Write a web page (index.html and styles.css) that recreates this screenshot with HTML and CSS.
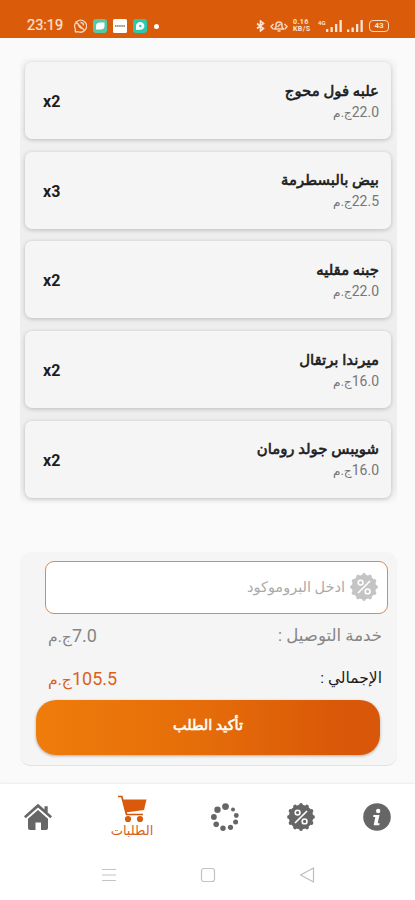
FILE: index.html
```html
<!DOCTYPE html>
<html lang="ar" dir="rtl">
<head>
<meta charset="utf-8">
<title>الطلبات</title>
<link rel="stylesheet" href="styles.css">
</head>
<body>
<svg class="defs" width="0" height="0" aria-hidden="true">
  <symbol id="percent" viewBox="0 0 28 28">
    <circle cx="14" cy="14" r="12.200" fill="currentColor"/>
    <circle cx="14" cy="14" r="12" fill="none" stroke="currentColor" stroke-width="3.800" stroke-linecap="round" pathLength="12" stroke-dasharray="0.001 0.999"/>
    <path d="M8 20 20 8" stroke="var(--hole)" stroke-width="1.700"/>
    <circle cx="10.600" cy="9.600" r="2.400" fill="none" stroke="var(--hole)" stroke-width="1.600"/>
    <circle cx="17.600" cy="18.400" r="2.400" fill="none" stroke="var(--hole)" stroke-width="1.600"/>
  </symbol>
</svg>
<div class="screen">
  <header class="status" dir="ltr">
    <div class="status-left">
      <span class="clock">23:19</span>
      <svg width="14" height="14" viewBox="0 0 14 14" fill="none" stroke="#f8d5bd" stroke-width="1.3"><path d="M2 12.5 2.6 10.5A6 6 0 1 1 5 12.6L2 13M2.5 2.5 11.5 11.5M5 4c0 3 2 5.500 5 5.500M7.500 3.500q3 0 3 3"/></svg>
      <svg width="14" height="14" viewBox="0 0 14 14"><rect width="14" height="14" rx="3" fill="#56c8a4"/><path d="M3 10.500V7q0-3.500 4-3.500h4.500V7q0 3.500-4 3.500z" fill="#fff"/></svg>
      <svg width="14" height="14" viewBox="0 0 14 14"><rect width="14" height="14" rx="1.500" fill="#fff"/><path d="M2 7h10" stroke="#a98d72" stroke-width="2" stroke-dasharray="1.500 .6"/></svg>
      <svg width="14" height="14" viewBox="0 0 14 14"><rect width="14" height="14" rx="3" fill="#2dc7ae"/><path d="M3 11V7a4.200 3.900 0 1 1 4 3.800z" fill="#fff"/><circle cx="7.300" cy="7" r="1.200" fill="#2dc7ae"/></svg>
      <i class="dot"></i>
    </div>
    <div class="status-right">
      <svg width="9" height="12" viewBox="0 0 9 12" fill="none" stroke="#fbe4d4" stroke-width="1.600"><path d="M1 3.500 7.500 8.500 4.500 11V1L7.500 3.500 1 8.500"/></svg>
      <svg width="18" height="12" viewBox="0 0 18 12" fill="none" stroke="#f8d5bd" stroke-width="1.500"><path d="M4.500 9h9L12 7V5a3 3 0 0 0-6 0v2zM7.500 11h3M3.500 4 1 6.500 3 9M14.500 4 17 6.500 15 9M7.500 7 10.500 4"/></svg>
      <span class="rate"><span>0.16</span><span>KB/S</span></span>
      <span class="signal"><span class="gen">4G</span><svg width="16" height="12" viewBox="0 0 16 12" fill="#fbe4d4"><path d="M0 9h2.300v3H0zM4.500 7h2.300v5H4.500zM9 4h2.300v8H9zM13.500 0h2.300v12h-2.300z"/></svg></span>
      <svg width="16" height="12" viewBox="0 0 16 12" fill="#fbe4d4"><path d="M0 9.500h2.300V12H0zM4.500 7.500h2.300V12H4.500zM9 4h2.300v8H9zM13.500 0h2.300v12h-2.300z"/></svg>
      <span class="battery">43</span>
    </div>
  </header>

  <main>
    <section class="items">
      <article class="card"><div class="info"><h2>علبه فول محوج</h2><p>22.0<span class="cur">ج.م</span></p></div><b dir="ltr">x2</b></article>
      <article class="card"><div class="info"><h2>بيض بالبسطرمة</h2><p>22.5<span class="cur">ج.م</span></p></div><b dir="ltr">x3</b></article>
      <article class="card"><div class="info"><h2>جبنه مقليه</h2><p>22.0<span class="cur">ج.م</span></p></div><b dir="ltr">x2</b></article>
      <article class="card"><div class="info"><h2>ميرندا برتقال</h2><p>16.0<span class="cur">ج.م</span></p></div><b dir="ltr">x2</b></article>
      <article class="card"><div class="info"><h2>شويبس جولد رومان</h2><p>16.0<span class="cur">ج.م</span></p></div><b dir="ltr">x2</b></article>
    </section>

    <section class="summary">
      <div class="promo">
        <svg class="promo-icon" width="28" height="28"><use href="#percent"/></svg>
        <span>ادخل البروموكود</span>
      </div>
      <div class="row fee"><span>خدمة التوصيل :</span><span class="num">7.0<span class="cur">ج.م</span></span></div>
      <div class="row total"><span>الإجمالي :</span><span class="num">105.5<span class="cur">ج.م</span></span></div>
      <button class="confirm">تأكيد الطلب</button>
    </section>
  </main>

  <nav class="tabs" dir="ltr">
    <div class="tab"><svg width="28" height="28" viewBox="0 0 28 28" fill="#666"><path d="M14 .8 20.500 6.500V3.200h3.200v6.200L28 13.300l-1.700 1.900L14 4.500 1.700 15.200 0 13.300z"/><path d="M14 7 24 15.700V25q0 2-2 2h-5v-7.500h-5.500V27H6q-2 0-2-2v-9.300z"/></svg></div>
    <div class="tab active"><svg width="29" height="28" viewBox="0 0 29 28"><path d="M0 1.500h3.800L8.500 19.500H25" fill="none" stroke="#cf560e" stroke-width="1.700"/><path d="M4.500 4.500H28.500L26 15 7.500 17.500z" fill="#d95a0b"/><circle cx="10" cy="24" r="3.100" fill="#d95a0b"/><circle cx="22" cy="24" r="3.100" fill="#d95a0b"/></svg><span>الطلبات</span></div>
    <div class="tab"><svg width="28" height="28" viewBox="0 0 28 28" fill="#666"><circle cx="14.500" cy="3.600" r="3.400"/><circle cx="22" cy="6.500" r="2"/><circle cx="25.300" cy="12.500" r="2.400"/><circle cx="24.600" cy="19" r="2.500"/><circle cx="19.500" cy="24.300" r="2.600"/><circle cx="12" cy="25.300" r="2.700"/><circle cx="5.200" cy="21.300" r="2.800"/><circle cx="2.900" cy="14" r="2.900"/><circle cx="6.500" cy="6.700" r="3.200"/></svg></div>
    <div class="tab offers"><svg width="28" height="28"><use href="#percent"/></svg></div>
    <div class="tab"><svg width="28" height="28" viewBox="0 0 28 28"><circle cx="14" cy="14" r="13.800" fill="#666"/><circle cx="15.200" cy="8" r="2.200" fill="#fff"/><path d="M10.500 12h6l-1.800 8.200h2l-.5 2h-5.500l1.600-8.200h-2.200z" fill="#fff"/></svg></div>
  </nav>
  <footer class="system" dir="ltr">
    <svg width="16" height="16" viewBox="0 0 16 16" stroke="#c4c4c4" stroke-width="1.200"><path d="M1 2.500h14M1 8h14M1 13.500h14"/></svg>
    <svg width="16" height="16" viewBox="0 0 16 16" fill="none" stroke="#c4c4c4" stroke-width="1.200"><rect x="1.500" y="1.500" width="13" height="13" rx="2.500"/></svg>
    <svg width="16" height="16" viewBox="0 0 16 16" fill="none" stroke="#bdbdbd" stroke-width="1.200" stroke-linejoin="round"><path d="M14.500 1v14L1.500 8z"/></svg>
  </footer>
</div>
</body>
</html>
```
FILE: styles.css
```css
* { box-sizing: border-box; margin: 0; }
body { background: #fafafa; font-family: Roboto, "DejaVu Sans", sans-serif; color: #1c1c1c; }
.defs { display: block; }
.screen { width: 415px; height: 900px; display: flex; flex-direction: column; overflow: hidden; }

.status { height: 38px; background: #da5b0a; color: #fbe4d4; display: flex; justify-content: space-between; align-items: flex-end; padding: 0 26px 5px 27px; }
.status-left { display: flex; align-items: center; gap: 6px; }
.status-left svg { display: block; }
.clock { font-size: 14.5px; line-height: 14px; width: 40px; -webkit-text-stroke: .2px; }
.dot { width: 5px; height: 5px; border-radius: 50%; background: #fff; margin-left: 1px; }
.status-right { display: flex; align-items: center; gap: 5px; height: 14px; }
.rate { display: flex; flex-direction: column; font-size: 7px; line-height: 7px; letter-spacing: .4px; font-weight: 700; width: 20px; }
.signal { display: flex; }
.gen { font-size: 6px; line-height: 6px; font-weight: 700; width: 8px; }
.battery { width: 20px; height: 12px; border: 1.5px solid #f8d5bd; border-radius: 4px; font-size: 8px; line-height: 9px; text-align: center; font-weight: 700; margin-left: 1px; }

main { flex: 1; }
.items { margin: 20px 18px 0 20px; padding: 4px 6px 6px 5px; display: flex; flex-direction: column; gap: 12.7px; background: linear-gradient(#f6f6f6, #eee 25%, #eee 96%, #f7f7f7); border-radius: 8px; }
.card { height: 77px; background: #f5f5f5; border-radius: 7px; box-shadow: 0 1px 4px rgba(0, 0, 0, .22); display: flex; justify-content: space-between; align-items: center; padding: 2px 12px 0 18px; }
.info h2 { font-size: 14.9px; line-height: 22px; font-weight: 400; -webkit-text-stroke: .6px; }
.info p { font-size: 14px; line-height: 21px; color: #777; }
.cur { font-size: .87em; }
.card b { font-size: 16px; font-weight: 700; }

.summary { margin: 48px 18px 0 20px; height: 214px; padding: 9px 0 0; background: #f5f5f5; border-radius: 10px; border-bottom: 1px solid #e2e2e2; }
.promo { margin: 0 9px 0 25px; height: 53px; border: 1.5px solid #d98a58; border-radius: 9px; background: #fff; display: flex; align-items: center; gap: 5px; padding: 0 9px; font-size: 14.5px; color: #aaa; }
.promo-icon { color: #c4c4c4; --hole: #fff; }
.row { display: flex; justify-content: space-between; align-items: center; height: 43px; padding: 0 15px 0 28px; font-size: 15.5px; }
.fee { color: #858585; font-size: 16.6px; }
.num { font-size: 18px; }
.total .num { color: #d9621b; }
.confirm { display: block; width: 344px; height: 55px; margin: 0 17px 0 0; border: 0; border-radius: 20px; background: linear-gradient(90deg, #ef7c0b, #e56c09 50%, #d95708 90%); box-shadow: 0 1px 3px rgba(0, 0, 0, .3); color: #fff; font: 400 14.4px Roboto, "DejaVu Sans", sans-serif; -webkit-text-stroke: .6px; padding-bottom: 4px; }

.tabs { height: 66px; flex: none; background: #fff; box-shadow: 0 -1px 2px rgba(0, 0, 0, .06); display: grid; grid-template-columns: 76px 112px 74px 77px 75px; }
.tab { display: flex; flex-direction: column; align-items: center; justify-content: center; }
.tab svg { flex: none; }
.active { color: #d9621b; font-size: 13px; line-height: 16px; }
.offers { color: #666; --hole: #fff; }
.system { height: 50px; flex: none; background: #fff; display: flex; justify-content: center; gap: 83px; align-items: center; }
```
